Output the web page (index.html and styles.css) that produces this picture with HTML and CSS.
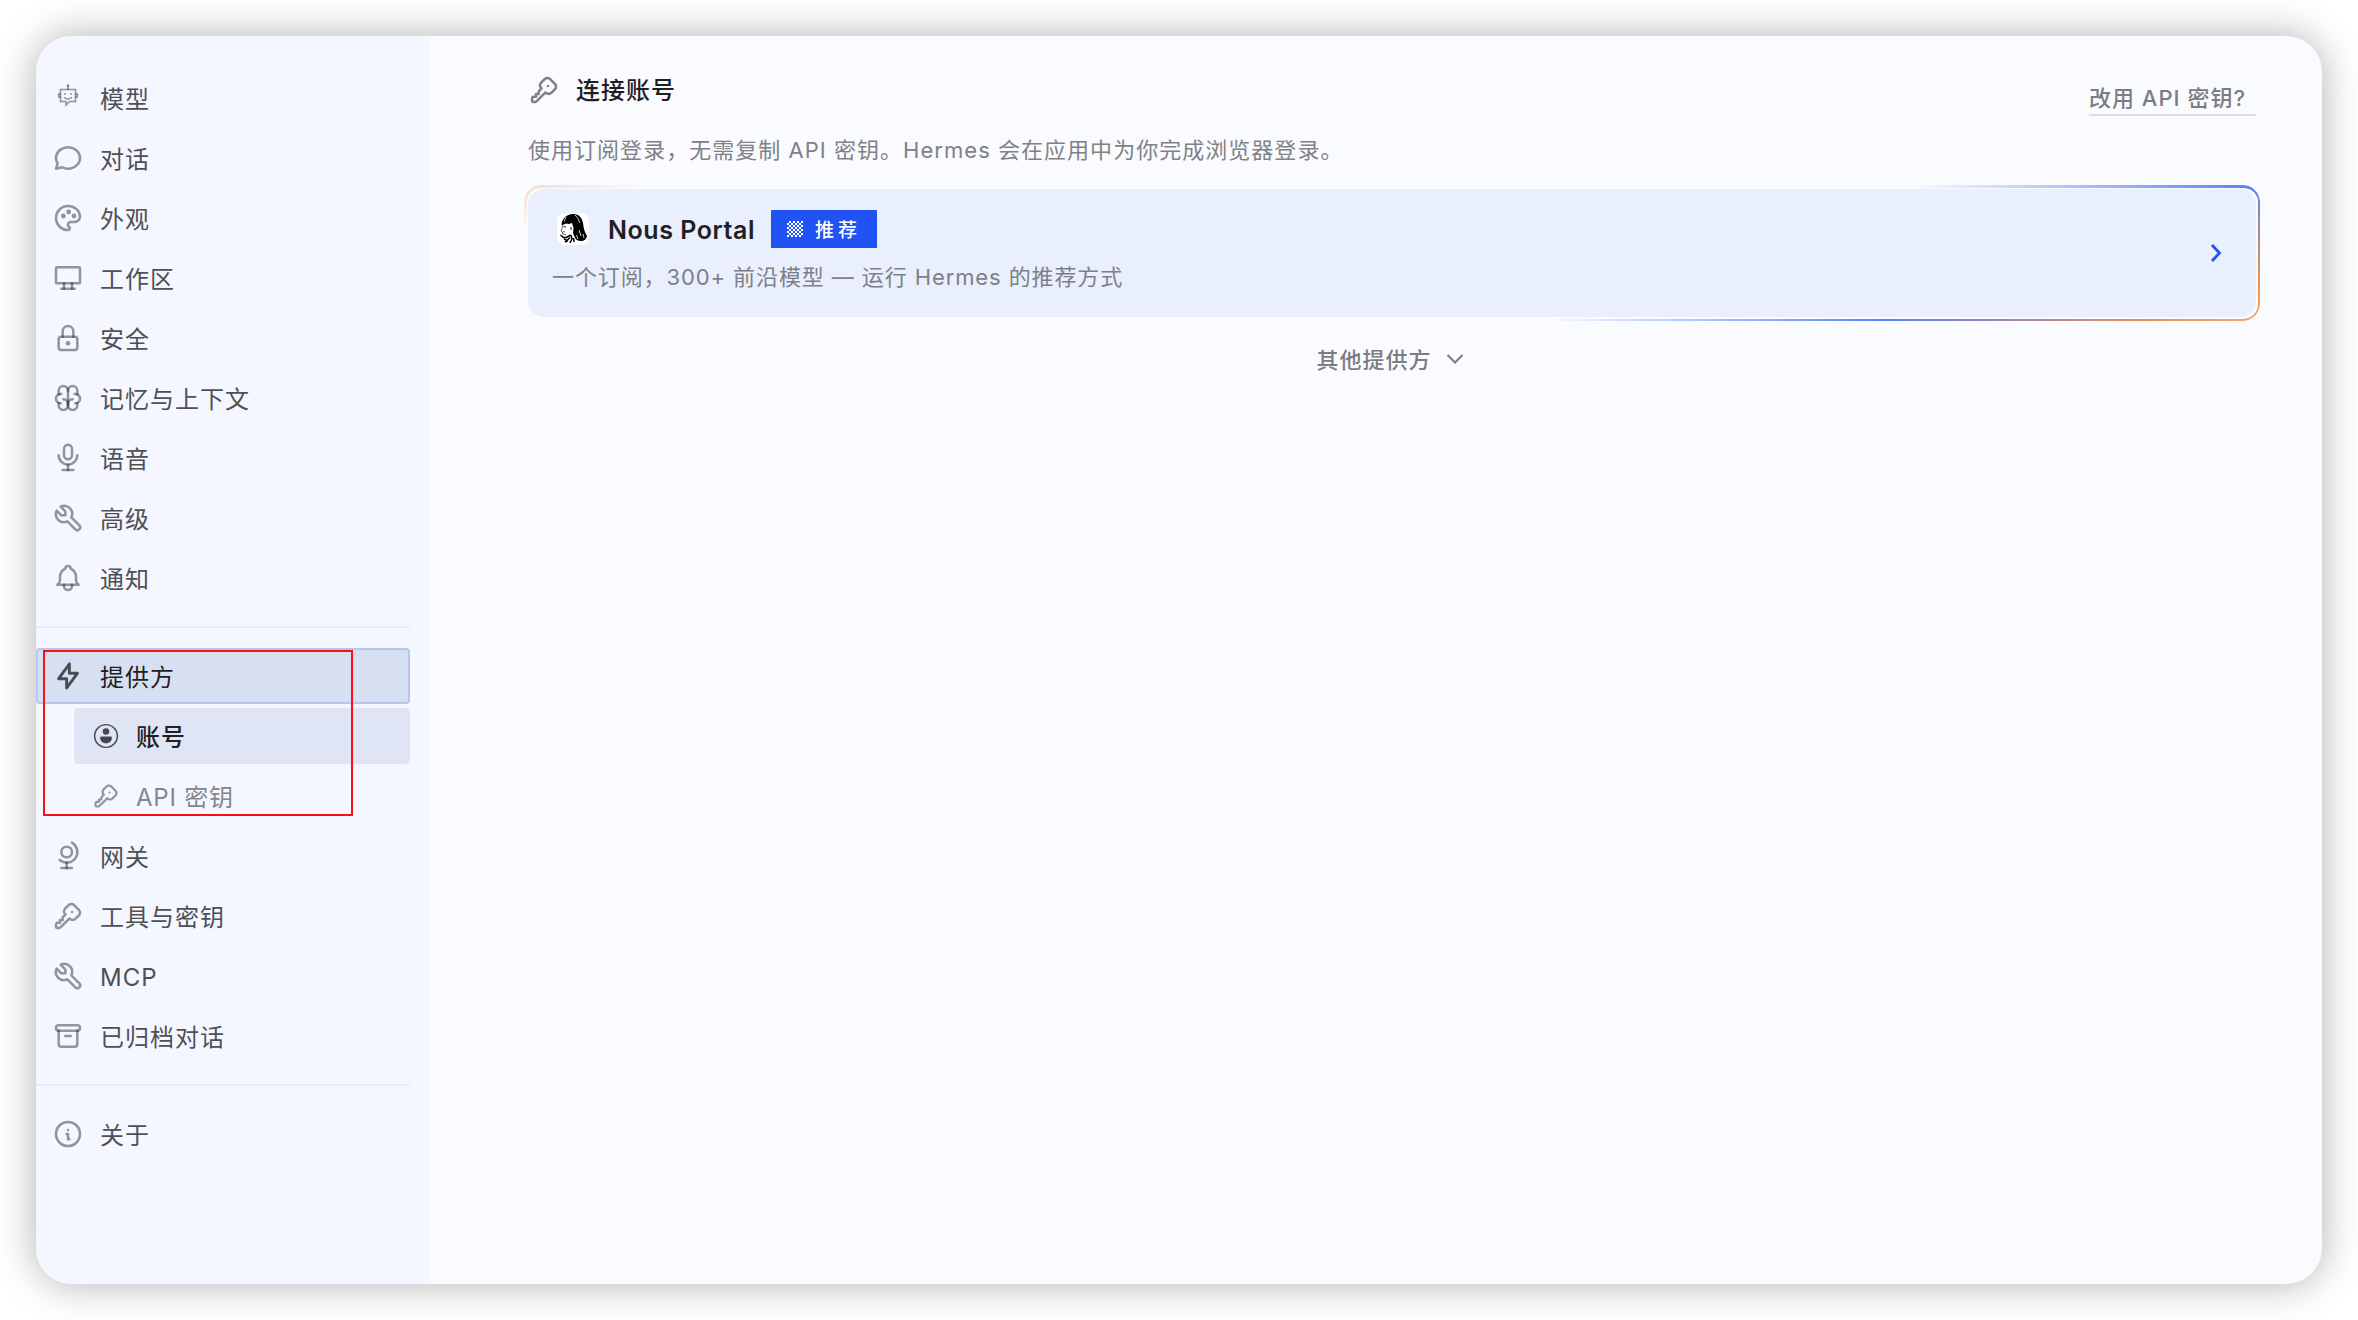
FILE: index.html
```html
<!DOCTYPE html>
<html lang="zh-CN">
<head>
    <meta charset="UTF-8" />
    <meta name="viewport" content="width=device-width, initial-scale=1" />
    <title>Hermes 设置</title>
    <link rel="stylesheet" href="styles.css">
</head>
<body>
<div class="window">
    <nav class="sidebar">
        <div class="group">
            <a class="item"><svg class="icon robot" viewBox="0 0 24 24"><path d="M4.500 5.500h15v12h-6l-3.500 3.500v-3.500h-5.500z"/><path d="M12 5.500v-3.500"/><circle class="dot" cx="12" cy="1.500" r="1.300"/><path d="M4 10h-1.300v3h1.300M20 10h1.300v3h-1.300"/><path d="M8.500 13.500c2 1.700 5 1.700 7 0"/><circle class="dot" cx="9" cy="10" r="1"/><circle class="dot" cx="15" cy="10" r="1"/></svg><span>模型</span></a>
            <a class="item"><svg class="icon" viewBox="0 0 24 24"><path d="M3 20l1.3 -3.9c-2.324 -3.437 -1.426 -7.872 2.1 -10.374c3.526 -2.501 8.59 -2.296 11.845 .48c3.255 2.777 3.695 7.266 1.029 10.501c-2.666 3.235 -7.615 4.215 -11.574 2.293l-4.7 1"/></svg><span>对话</span></a>
            <a class="item"><svg class="icon" viewBox="0 0 24 24"><path d="M12 21a9 9 0 0 1 0 -18c4.97 0 9 3.582 9 8c0 1.06 -.474 2.078 -1.318 2.828c-.844 .75 -1.989 1.172 -3.182 1.172h-2.5a2 2 0 0 0 -1 3.75a1.3 1.3 0 0 1 -1 2.250"/><circle class="dot" cx="8.500" cy="10.500" r="1.800"/><circle class="dot" cx="12.500" cy="7.500" r="1.800"/><circle class="dot" cx="16.500" cy="10.500" r="1.800"/></svg><span>外观</span></a>
            <a class="item"><svg class="icon" viewBox="0 0 24 24"><path d="M3 5a1 1 0 0 1 1 -1h16a1 1 0 0 1 1 1v10a1 1 0 0 1 -1 1h-16a1 1 0 0 1 -1 -1v-10"/><path d="M7 20h10"/><path d="M9 16v4"/><path d="M15 16v4"/></svg><span>工作区</span></a>
            <a class="item"><svg class="icon" viewBox="0 0 24 24"><path d="M5 13a2 2 0 0 1 2 -2h10a2 2 0 0 1 2 2v6a2 2 0 0 1 -2 2h-10a2 2 0 0 1 -2 -2v-6"/><circle class="dot" cx="12" cy="16" r="1.800"/><path d="M8 11v-4a4 4 0 1 1 8 0v4"/></svg><span>安全</span></a>
            <a class="item"><svg class="icon" viewBox="0 0 24 24"><path d="M15.5 13a3.5 3.5 0 0 0 -3.5 3.500v1a3.5 3.5 0 0 0 7 0v-1.8"/><path d="M8.500 13a3.5 3.5 0 0 1 3.500 3.500v1a3.5 3.5 0 0 1 -7 0v-1.8"/><path d="M17.5 16a3.5 3.5 0 0 0 0 -7h-.5"/><path d="M19 9.300v-2.800a3.500 3.500 0 0 0 -7 0"/><path d="M6.500 16a3.500 3.500 0 0 1 0 -7h.5"/><path d="M5 9.300v-2.800a3.500 3.500 0 0 1 7 0v10"/></svg><span>记忆与上下文</span></a>
            <a class="item"><svg class="icon" viewBox="0 0 24 24"><path d="M9 5a3 3 0 0 1 3 -3a3 3 0 0 1 3 3v5a3 3 0 0 1 -3 3a3 3 0 0 1 -3 -3z"/><path d="M5 10a7 7 0 0 0 14 0"/><path d="M8 21h8"/><path d="M12 17v4"/></svg><span>语音</span></a>
            <a class="item"><svg class="icon" viewBox="0 0 24 24"><path d="M7 10h3v-3l-3.500 -3.500a6 6 0 0 1 8 8l6 6a2 2 0 0 1 -3 3l-6 -6a6 6 0 0 1 -8 -8l3.500 3.500"/></svg><span>高级</span></a>
            <a class="item"><svg class="icon" viewBox="0 0 24 24"><path d="M10 5a2 2 0 1 1 4 0a7 7 0 0 1 4 6v3a4 4 0 0 0 2 3h-16a4 4 0 0 0 2 -3v-3a7 7 0 0 1 4 -6"/><path d="M9 17v1a3 3 0 0 0 6 0v-1"/></svg><span>通知</span></a>
        </div>

        <div class="group">
            <a class="item active"><svg class="icon" viewBox="0 0 24 24"><path d="M13 3v7h6l-8 11v-7h-6l8 -11"/></svg><span>提供方</span></a>
            <a class="item sub selected"><svg class="icon account" viewBox="0 0 16 16"><circle cx="8" cy="8" r="7"/><circle class="dot" cx="8" cy="5.200" r="2"/><path class="dot" d="M5.200 8.300h5.600a.8 .8 0 0 1 .8 .8c0 2 -1.500 3.400 -3.600 3.400s-3.600 -1.400 -3.600 -3.400a.8 .8 0 0 1 .8 -.8z"/></svg><span>账号</span></a>
            <a class="item sub"><svg class="icon" viewBox="0 0 24 24"><path d="M16.555 3.843l3.602 3.602a2.877 2.877 0 0 1 0 4.069l-2.643 2.643a2.877 2.877 0 0 1 -4.069 0l-.301 -.301l-6.558 6.558a2 2 0 0 1 -1.239 .578l-.175 .008h-1.172a1 1 0 0 1 -.993 -.883l-.007 -.117v-1.172a2 2 0 0 1 .467 -1.284l.119 -.13l.414 -.414h2v-2h2v-2l2.144 -2.144l-.301 -.301a2.877 2.877 0 0 1 0 -4.069l2.643 -2.643a2.877 2.877 0 0 1 4.069 0"/><path d="M15 9h.01"/></svg><span>API 密钥</span></a>
            <a class="item"><svg class="icon" viewBox="0 0 24 24"><path d="M7 9a4 4 0 1 0 8 0a4 4 0 0 0 -8 0"/><path d="M5.750 15a8.015 8.015 0 1 0 9.250 -13"/><path d="M11 17v4"/><path d="M7 21h8"/></svg><span>网关</span></a>
            <a class="item"><svg class="icon" viewBox="0 0 24 24"><path d="M16.555 3.843l3.602 3.602a2.877 2.877 0 0 1 0 4.069l-2.643 2.643a2.877 2.877 0 0 1 -4.069 0l-.301 -.301l-6.558 6.558a2 2 0 0 1 -1.239 .578l-.175 .008h-1.172a1 1 0 0 1 -.993 -.883l-.007 -.117v-1.172a2 2 0 0 1 .467 -1.284l.119 -.13l.414 -.414h2v-2h2v-2l2.144 -2.144l-.301 -.301a2.877 2.877 0 0 1 0 -4.069l2.643 -2.643a2.877 2.877 0 0 1 4.069 0"/><path d="M15 9h.01"/></svg><span>工具与密钥</span></a>
            <a class="item"><svg class="icon" viewBox="0 0 24 24"><path d="M7 10h3v-3l-3.500 -3.500a6 6 0 0 1 8 8l6 6a2 2 0 0 1 -3 3l-6 -6a6 6 0 0 1 -8 -8l3.500 3.500"/></svg><span class="latin">MCP</span></a>
            <a class="item"><svg class="icon" viewBox="0 0 24 24"><path d="M3 6a2 2 0 0 1 2 -2h14a2 2 0 0 1 0 4h-14a2 2 0 0 1 -2 -2"/><path d="M5 8v10a2 2 0 0 0 2 2h10a2 2 0 0 0 2 -2v-10"/><path d="M10 12h4"/></svg><span>已归档对话</span></a>
        </div>

        <div class="group">
            <a class="item"><svg class="icon" viewBox="0 0 24 24"><path d="M3 12a9 9 0 1 0 18 0a9 9 0 0 0 -18 0"/><path d="M12 9h.01"/><path d="M11 12h1v4h1"/></svg><span>关于</span></a>
        </div>
    </nav>

    <main class="content">
        <header class="head">
            <h1><svg class="icon" viewBox="0 0 24 24"><path d="M16.555 3.843l3.602 3.602a2.877 2.877 0 0 1 0 4.069l-2.643 2.643a2.877 2.877 0 0 1 -4.069 0l-.301 -.301l-6.558 6.558a2 2 0 0 1 -1.239 .578l-.175 .008h-1.172a1 1 0 0 1 -.993 -.883l-.007 -.117v-1.172a2 2 0 0 1 .467 -1.284l.119 -.13l.414 -.414h2v-2h2v-2l2.144 -2.144l-.301 -.301a2.877 2.877 0 0 1 0 -4.069l2.643 -2.643a2.877 2.877 0 0 1 4.069 0"/><path d="M15 9h.01"/></svg><span>连接账号</span></h1>
            <a class="switch">改用 API 密钥?</a>
        </header>
        <p class="intro">使用订阅登录，无需复制 API 密钥。Hermes 会在应用中为你完成浏览器登录。</p>

        <div class="card">
            <div class="card-text">
                <div class="card-title">
                    <svg class="logo" viewBox="0 0 32 32">
                        <rect width="32" height="32" rx="8" fill="#fff"/>
                        <!-- hair -->
                        <path d="M4.500 12C5 6 9 1.500 16 1c6-.3 9 4 10 9 .6 5 1.500 9 4 13-.5 3-3 5-6 5-3 0-5-1-6-3l-2-5 .5-5-1.500-5-3 1-3-.5-2 1z"/>
                        <!-- face -->
                        <path d="M5.500 11.500l-.3 3.500-1.200 3 1.300 1 .3 2 3.400 .8" fill="none" stroke="#000" stroke-width=".6"/>
                        <path d="M6.500 13.800h2.500M6 18.800h1.500M14 14v3" stroke="#000" stroke-width=".9"/>
                        <!-- curls and collar -->
                        <path d="M3.500 22l3 2.500h3l4-2.500M7 26l3 1.500 3-3M8 29l3-1.500M14 22l1 4-2 4M16.500 25l.5 4" fill="none" stroke="#000" stroke-width="1.500"/>
                        <path d="M18 2c2 2 4 4 4.500 8M9.500 4c-1 1-2 2.500-2 4.500M22 17l2 6M19.500 22l1.500 4M26 21l1 4" fill="none" stroke="#fff" stroke-width=".8"/>
                    </svg>
                    <span class="name">Nous Portal</span>
                    <span class="badge"><i class="dither"></i>推荐</span>
                </div>
                <p>一个订阅，300+ 前沿模型 — 运行 Hermes 的推荐方式</p>
            </div>
            <svg class="arrow" viewBox="0 0 12 20"><path d="M2 2l7.500 8l-7.500 8"/></svg>
        </div>

        <button class="more"><span>其他提供方</span><svg viewBox="0 0 18 12"><path d="M1.500 2l7.500 7.500l7.500 -7.500"/></svg></button>
    </main>
</div>
<div class="marker"></div>
</body>
</html>
```
FILE: styles.css
```css
* {
  box-sizing: border-box;
}
body {
  margin: 0;
  padding: 36px;
  height: 1320px;
  overflow: hidden;
  background: #fff;
  color: #4f5054;
  font-family: Inter, "Noto Sans CJK SC", sans-serif;
  font-size: 24px;
  letter-spacing: 1px;
}
h1, p {
  margin: 0;
}
.window {
  display: flex;
  height: 1248px;
  border-radius: 36px;
  overflow: hidden;
  background: #f9fbff;
  box-shadow: 0 0 40px rgba(0,0,0,0.31);
}

/* sidebar */
.sidebar {
  width: 394px;
  padding: 34px 20px 0 0;
  background: #f4f7ff;
}
.group {
  display: flex;
  flex-direction: column;
  gap: 4px;
}
.group + .group {
  margin-top: 20px;
  padding-top: 20px;
  border-top: 2px solid #e6ebfe;
}
.item {
  display: flex;
  align-items: center;
  gap: 16px;
  height: 56px;
  padding-left: 16px;
  border-radius: 4px;
}
.item span {
  padding-bottom: 2px;
}
.item .latin {
  padding: 3px 0 0;
}
.icon {
  width: 32px;
  height: 32px;
  flex: none;
  fill: none;
  stroke: rgba(30,30,34,0.46);
  stroke-width: 1.9;
  stroke-linecap: round;
  stroke-linejoin: round;
}
.icon .dot {
  fill: rgba(30,30,34,0.46);
  stroke: none;
}
.robot {
  width: 24px;
  height: 24px;
  margin: -5px 4px 0;
  stroke-width: 1.6;
  stroke-linejoin: miter;
}
.active {
  padding-left: 14px;
  border: 2px solid #b7c7ea;
  background: #d7e0f3;
  color: #1f2023;
}
.active .icon {
  stroke: #4a4c52;
  stroke-width: 2.2;
}
.sub {
  margin-left: 38px;
  padding-left: 18px;
  color: #85868b;
  letter-spacing: 0.8px;
}
.sub .icon {
  width: 28px;
  height: 28px;
}
.selected {
  background: #dfe5f5;
  color: #1f2023;
  font-weight: 500;
  letter-spacing: 1px;
}
.selected .account {
  width: 26px;
  height: 26px;
  margin: 0 1px;
  stroke: #44464d;
  stroke-width: 0.9;
}
.account .dot {
  fill: #44464d;
}

/* content */
.content {
  flex: 1;
  padding: 34px 62px 0 95px;
}
.head {
  display: flex;
  justify-content: space-between;
  height: 60px;
  padding: 0 4px 0 3px;
}
h1 {
  display: flex;
  align-items: center;
  gap: 16px;
  height: 40px;
  color: #1f2023;
  font-size: 24px;
  font-weight: 500;
}
h1 span {
  padding-bottom: 3px;
}
h1 .icon {
  stroke: rgba(30,30,34,0.55);
}
.switch {
  height: 36px;
  margin-top: 10px;
  padding-right: 10px;
  border-bottom: 2px solid #dcdde2;
  color: #7c7d81;
  font-size: 22px;
  font-weight: 500;
  line-height: 36px;
}
.intro {
  height: 55px;
  padding-left: 3px;
  line-height: 40px;
  font-size: 22px;
  letter-spacing: 1.03px;
  color: #808185;
}
.card {
  position: relative;
  display: flex;
  align-items: center;
  justify-content: space-between;
  height: 128px;
  margin: 4px 4px 0 3px;
  padding: 0 34px 0 24px;
  border-radius: 16px;
  background: #e9effc;
}
/* gradient ring just outside the card */
.card::before {
  content: "";
  position: absolute;
  inset: -4px -4px -4px -4px;
  padding: 3px 2px 2px 3px;
  border-radius: 17px;
  background: linear-gradient(160deg, rgba(243,146,78,0.3) 0%, rgba(243,146,78,0) 6%, rgba(89,131,247,0) 66%, #5983f7 82%, #ef9150 95%, #f5a873 100%);
  -webkit-mask: linear-gradient(#000 0 0) content-box, linear-gradient(#000 0 0);
  -webkit-mask-composite: xor;
  mask-composite: exclude;
}
.card-title {
  display: flex;
  align-items: center;
  height: 38px;
  padding-left: 5px;
}
.logo {
  width: 32px;
  height: 32px;
  margin-right: 19px;
}
.name {
  padding-top: 2px;
  color: #1f2023;
  font-size: 25px;
  font-weight: 600;
  letter-spacing: 0.55px;
}
.badge {
  display: flex;
  align-items: center;
  gap: 12px;
  width: 106px;
  height: 38px;
  margin-left: 16px;
  padding-left: 16px;
  background: #2152f3;
  color: #fff;
  font-size: 19px;
  font-weight: 500;
  letter-spacing: 4px;
  white-space: nowrap;
}
.dither {
  width: 16px;
  height: 16px;
  flex: none;
  background: conic-gradient(#fff 25%, transparent 0 50%, #fff 0 75%, transparent 0) 0 0 / 4px 4px;
}
.card p {
  margin-top: 9px;
  font-size: 22px;
  line-height: 40px;
  letter-spacing: 0.9px;
  color: #7d8088;
}
.arrow {
  width: 12px;
  height: 20px;
  fill: none;
  stroke: #2152f3;
  stroke-width: 2.800;
}
.more {
  display: flex;
  align-items: center;
  gap: 14px;
  height: 40px;
  margin: 22px auto 0;
  padding: 0 5px 0 0;
  border: 0;
  background: none;
  color: #7c7d81;
  font: 500 22px Inter, "Noto Sans CJK SC", sans-serif;
  letter-spacing: 1px;
}
.more span {
  padding-bottom: 2px;
}
.more svg {
  width: 18px;
  height: 12px;
  fill: none;
  stroke: #7c7d81;
  stroke-width: 2;
}

/* red frame over the provider entries */
.marker {
  position: absolute;
  left: 43px;
  top: 650px;
  width: 310px;
  height: 166px;
  border: 2px solid #fa0f14;
}
```
